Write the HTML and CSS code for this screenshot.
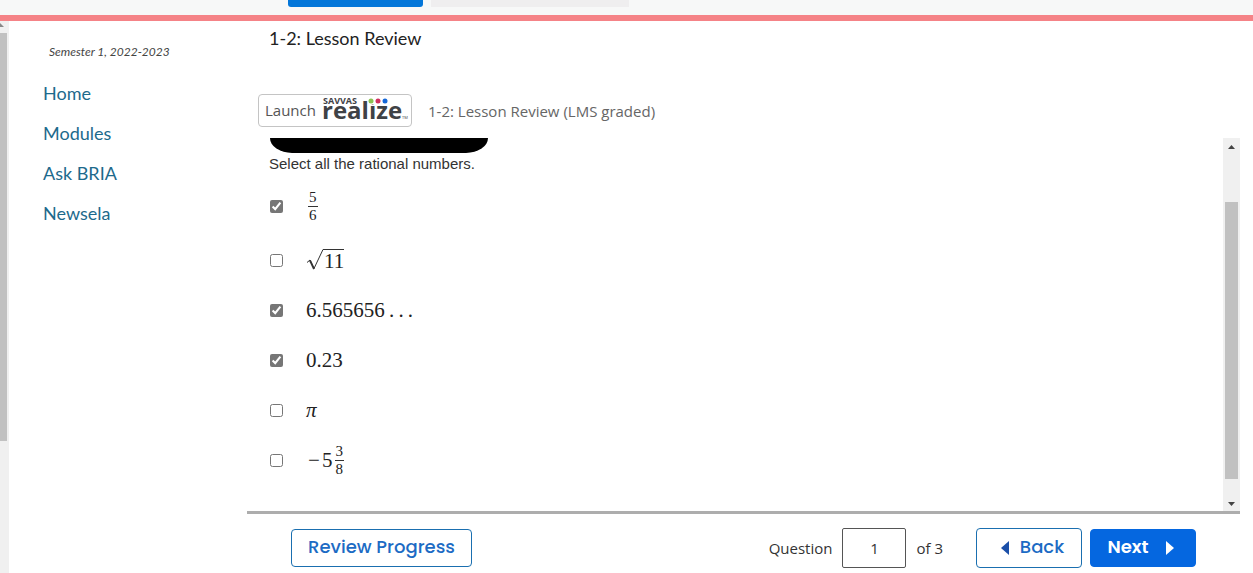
FILE: index.html
```html
<!DOCTYPE html>
<html lang="en">
<head>
  <meta charset="UTF-8" />
  <meta name="viewport" content="width=device-width, initial-scale=1.0"/>
  <title>1-2: Lesson Review</title>
  <link rel="stylesheet" href="styles.css">
</head>
<body>
  <header class="topbar">
    <div class="tab tab-active"></div>
    <div class="tab tab-idle"></div>
  </header>

  <div class="page">
    <div class="page-scroll">
      <svg class="page-arrow" viewBox="0 0 4 4"><path d="M0 0L4 4H0z"/></svg>
      <div class="page-thumb"></div>
    </div>

    <nav class="sidebar">
      <p class="term">Semester 1, 2022-2023</p>
      <a href="#">Home</a>
      <a href="#">Modules</a>
      <a href="#">Ask BRIA</a>
      <a href="#">Newsela</a>
    </nav>

    <main class="content">
      <h1 class="title">1-2: Lesson Review</h1>

      <div class="launch-row">
        <button class="launch" type="button">
          <span>Launch</span>
          <svg class="logo" width="88" height="30" viewBox="0 0 88 30">
            <text class="logo-name" x="0" y="24">realize</text>
            <rect x="46" y="2" width="8" height="7" fill="#fff"/>
            <text class="logo-brand" x="1" y="9">SAVVAS</text>
            <circle cx="49" cy="6" r="2.5" fill="#8cc152"/>
            <circle cx="56" cy="6" r="2.5" fill="#d0305e"/>
            <circle cx="63" cy="6" r="2.5" fill="#1467d8"/>
            <text class="logo-tm" x="80" y="24">TM</text>
          </svg>
        </button>
        <span class="launch-label">1-2: Lesson Review (LMS graded)</span>
      </div>

      <section class="frame">
        <form class="question">
          <div class="redacted"></div>
          <p class="prompt">Select all the rational numbers.</p>

          <label class="option option-first">
            <input type="checkbox" checked>
            <span class="math"><span class="frac"><span>5</span><span>6</span></span></span>
          </label>
          <label class="option">
            <input type="checkbox">
            <span class="math root">
              <svg width="18" height="22" viewBox="0 0 18 22"><path d="M1 13.500L4 11L8 19.500L17 .5H18" fill="none" stroke="#333" stroke-width="1"/><path d="M4 11.500L8 20" stroke="#333" stroke-width="1.800"/></svg><span class="radicand">11</span>
            </span>
          </label>
          <label class="option">
            <input type="checkbox" checked>
            <span class="math">6.565656&#8201;.&#8201;.&#8201;.</span>
          </label>
          <label class="option">
            <input type="checkbox" checked>
            <span class="math">0.23</span>
          </label>
          <label class="option">
            <input type="checkbox">
            <span class="math"><i>π</i></span>
          </label>
          <label class="option">
            <input type="checkbox">
            <span class="math"><span class="minus">−</span>5<span class="frac">
              <span>3</span><span>8</span></span></span>
          </label>
        </form>

        <div class="frame-scroll">
          <svg width="7" height="4" viewBox="0 0 7 4"><path d="M0 4L3.500 0L7 4z"/></svg>
          <div class="frame-track"><div class="frame-thumb"></div></div>
          <svg width="7" height="4" viewBox="0 0 7 4"><path d="M0 0L3.500 4L7 0z"/></svg>
        </div>
      </section>

      <footer class="controls">
        <button class="btn btn-review" type="button">Review Progress</button>
        <div class="pager">
          <label for="questionInput">Question</label>
          <input type="text" id="questionInput" value="1">
          <span>of 3</span>
        </div>
        <button class="btn btn-back" type="button">
          <svg width="8" height="14" viewBox="0 0 8 14"><path d="M8 1V15L0 8z" fill="#1b4fa8"/></svg>
          Back
        </button>
        <button class="btn btn-next" type="button">
          Next
          <svg width="8" height="14" viewBox="0 0 8 14"><path d="M0 1V15L8 8z" fill="#fff"/></svg>
        </button>
      </footer>
    </main>
  </div>
</body>
</html>
```

FILE: styles.css
```css
* {
  box-sizing: border-box;
}

body {
  margin: 0;
  height: 100vh;
  display: flex;
  flex-direction: column;
  overflow: hidden;
  background: #fff;
  color: #333;
  font-family: "Open Sans", sans-serif;
  font-size: 15px;
}

.topbar {
  display: flex;
  gap: 8px;
  height: 21px;
  padding-left: 288px;
  background: #f7f8f8;
  border-bottom: 6px solid #f58387;
}

.tab {
  height: 7px;
}

.tab-active {
  width: 135px;
  background: #0376d9;
  border-radius: 0 0 3px 3px;
}

.tab-idle {
  width: 198px;
  background: #efeeef;
}

.page {
  flex: 1;
  display: flex;
  min-height: 0;
}

.page-scroll {
  width: 9px;
  background: #f0f0f0;
}

.page-arrow {
  display: block;
  width: 4px;
  height: 4px;
  margin: 2px 0 6px;
  fill: #888;
}

.page-thumb {
  width: 7px;
  height: 74%;
  background: #c1c1c1;
}

/* sidebar */
.sidebar {
  width: 238px;
  padding: 21px 0 0 34px;
  display: flex;
  flex-direction: column;
  align-items: flex-start;
  gap: 16px;
  font-family: Lato, sans-serif;
}

.sidebar a {
  color: #1d6a8c;
  font-size: 18px;
  line-height: 24px;
  text-decoration: none;
}

.term {
  margin: 0 0 3px 6px;
  font-size: 12px;
  line-height: 20px;
  font-style: italic;
  color: #444;
}

/* main column */
.content {
  flex: 1;
  min-width: 0;
  display: flex;
  flex-direction: column;
  padding-right: 13px;
}

.title {
  margin: 0;
  padding: 5px 22px 0;
  font-family: Lato, sans-serif;
  font-size: 18px;
  font-weight: 400;
  line-height: 24px;
  color: #222;
}

.launch-row {
  display: flex;
  align-items: center;
  gap: 16px;
  padding: 44px 11px 11px;
}

.launch {
  display: flex;
  align-items: center;
  gap: 6px;
  height: 33px;
  padding: 0 0 2px 6px;
  width: 154px;
  background: #fff;
  border: 1px solid #c4c4c4;
  border-radius: 4px;
  font-family: inherit;
  font-size: 15px;
  color: #555;
}

.logo {
  flex: none;
  overflow: visible;
}

.logo text {
  fill: #3f4246;
  font-family: "Open Sans", sans-serif;
}

.logo .logo-brand {
  font-size: 9px;
  font-weight: 700;
}

.logo .logo-name {
  font-size: 24px;
  font-weight: 700;
}

.logo .logo-tm {
  font-size: 4px;
}

.launch-label {
  font-size: 15px;
  color: #666;
}

.frame {
  flex: 1;
  min-height: 0;
  display: flex;
  border-bottom: 3px solid #adadad;
}

.question {
  flex: 1;
  padding-left: 22px;
}

.redacted {
  width: 218px;
  height: 15px;
  margin-left: 1px;
  background: #000;
  border-radius: 0 0 22px 22px / 0 0 15px 15px;
}

.prompt {
  margin: 0;
  padding-bottom: 2px;
  font-family: "Liberation Sans", Arial, sans-serif;
  font-size: 15px;
  line-height: 22px;
}

.option {
  display: flex;
  align-items: center;
  gap: 23px;
  height: 50px;
}

.option-first {
  height: 58px;
}

.option input {
  width: 13px;
  height: 13px;
  margin: 0 0 0 1px;
  accent-color: #767676;
}

.math {
  display: flex;
  align-items: center;
  font-family: "Liberation Serif", "Times New Roman", serif;
  font-size: 21px;
  line-height: 24px;
  color: #222;
}

.frac {
  display: inline-flex;
  flex-direction: column;
  margin: 0 2px;
  font-size: 15px;
  line-height: 17px;
  text-align: center;
}

.frac span {
  padding: 0 1px;
}

.frac span:first-child {
  border-bottom: 1px solid #333;
}

.minus {
  width: 16px;
  text-align: center;
}

.root {
  align-items: flex-start;
}

.radicand {
  border-top: 1px solid #333;
  line-height: 22px;
}

.frame-scroll {
  width: 17px;
  padding: 7px 0 5px;
  display: flex;
  flex-direction: column;
  align-items: center;
  background: #f0f0f0;
  fill: #444;
}

.frame-track {
  flex: 1;
  width: 13px;
  padding: 53px 0 23px;
}

.frame-thumb {
  height: 100%;
  background: #c1c1c1;
}

/* bottom bar */
.controls {
  display: flex;
  align-items: center;
  height: 59px;
  padding: 9px 44px 0;
}

.btn {
  display: flex;
  align-items: center;
  justify-content: center;
  width: 106px;
  height: 38px;
  padding: 0 0 3px;
  border: 1px solid #1a6fb0;
  border-radius: 4px;
  background: #fff;
  color: #1c6bc4;
  font-family: Poppins, Inter, sans-serif;
  font-size: 18px;
  font-weight: 500;
}

.btn-review {
  width: 181px;
}

.btn-back {
  height: 40px;
  gap: 11px;
  padding-left: 7px;
}

.btn-next {
  gap: 17px;
  padding-right: 5px;
  margin-left: 8px;
  background: #0567e0;
  border-color: #0567e0;
  color: #fff;
  font-weight: 600;
}

.btn svg {
  overflow: visible;
}

.pager {
  display: flex;
  align-items: center;
  gap: 10px;
  margin-left: auto;
  margin-right: 33px;
}

.pager input {
  width: 64px;
  height: 40px;
  padding: 0;
  border: 1px solid #555;
  border-radius: 2px;
  background: #fff;
  color: #333;
  font-family: inherit;
  font-size: 15px;
  text-align: center;
}
```
